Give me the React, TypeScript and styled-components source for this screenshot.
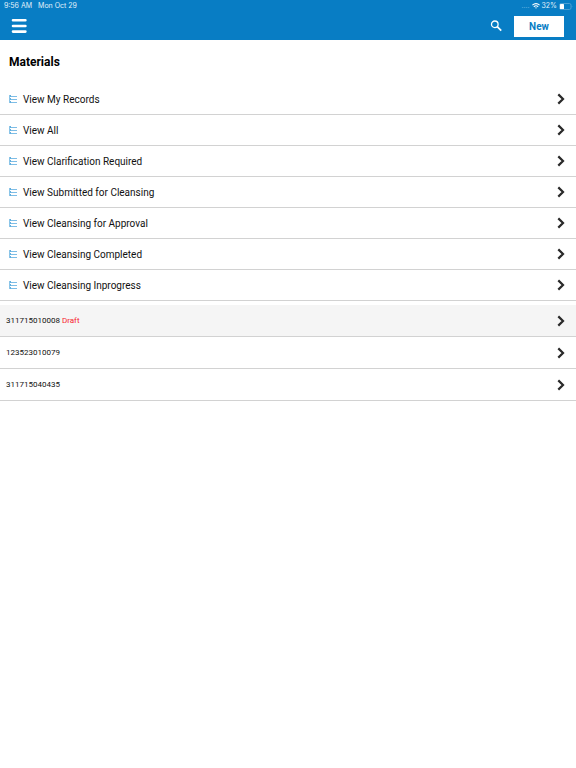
import React from "react";
import styled, { createGlobalStyle } from "styled-components";

const GlobalStyle = createGlobalStyle`
  * { box-sizing: border-box; }
  body {
    margin: 0;
    background: #fff;
    color: #000;
    font-family: Roboto, "Liberation Sans", sans-serif;
  }
  button { font: inherit; border: 0; padding: 0; cursor: pointer; }
`;

const TopArea = styled.header`
  background: #087dc4;
  height: 40px;
`;

const StatusBar = styled.div`
  display: flex;
  align-items: center;
  justify-content: space-between;
  height: 12px;
  padding: 0 3px 0 4px;
  color: #e0f0fa;
  font-family: Inter, sans-serif;
  font-size: 7px;
  line-height: 12px;
`;

const StatusGroup = styled.div<{ $gap: number }>`
  display: flex;
  align-items: center;
  gap: ${(p) => p.$gap}px;
`;

const SignalDots = styled.span`
  color: #6fb4e0;
`;

const Toolbar = styled.div`
  display: flex;
  align-items: center;
  height: 28px;
  padding: 0 12px 0 11px;
`;

const IconButton = styled.button`
  display: flex;
  align-items: center;
  background: none;
  color: #fff;
`;

const Actions = styled.div`
  display: flex;
  align-items: center;
  gap: 12px;
  margin-left: auto;
`;

const NewButton = styled.button`
  && {
    width: 50px;
    height: 21px;
    background: #fff;
    color: #087dc4;
    font-size: 10px;
    font-weight: 700;
  }
`;

const Title = styled.h1`
  margin: 0;
  padding: 14px 9px;
  font-size: 12px;
  line-height: 16px;
  font-weight: 700;
`;

const List = styled.ul`
  list-style: none;
  margin: 0 0 4px;
  padding: 0;
`;

const Row = styled.a<{ $compact?: boolean; $shaded?: boolean }>`
  display: flex;
  align-items: center;
  height: ${(p) => (p.$compact ? 32 : 31)}px;
  padding: 0 10px 0 ${(p) => (p.$compact ? 6 : 8)}px;
  border-bottom: 1px solid #d2d2d2;
  background: ${(p) => (p.$shaded ? "#f5f5f5" : "#fff")};
  color: #111;
  font-size: ${(p) => (p.$compact ? 8 : 10)}px;
  text-decoration: none;
`;

const Label = styled.span`
  flex: 1;
`;

const Draft = styled.span`
  color: #f5222d;
`;

const ListGlyph = styled.svg`
  margin-right: 5px;
`;

const Chevron = () => (
  <svg width="10" height="12" viewBox="0 0 10 12" fill="none" stroke="#2a2a2a" strokeWidth="2.2" aria-hidden="true">
    <path d="M2.3 1.4 7 6 2.3 10.6" />
  </svg>
);

const ListIcon = () => (
  <ListGlyph width="10" height="10" viewBox="0 0 10 10" aria-hidden="true">
    <path d="M1 1h2v2H1zM1 4h2v2H1zM1 7h2v2H1z" fill="#62aedd" />
    <path d="M1.5 1v8" stroke="#8bc5e8" />
    <path d="M3 2.5h6M3 5.5h6M3 8.5h6" stroke="#7dbde6" />
  </ListGlyph>
);

const MenuIcon = () => (
  <svg width="16" height="16" viewBox="0 0 16 16" stroke="#fff" strokeWidth="2.6" strokeLinecap="round" aria-hidden="true">
    <path d="M2 2.3h12.4M2 8h12.4M2 13.6h12.4" />
  </svg>
);

const SearchIcon = () => (
  <svg width="12" height="12" viewBox="0 0 12 12" fill="none" stroke="#fff" aria-hidden="true">
    <circle cx="4.8" cy="4.3" r="3.3" strokeWidth="1.3" />
    <path d="m7.2 6.7 4 4" strokeWidth="1.7" />
  </svg>
);

const WifiIcon = () => (
  <svg width="8" height="6" viewBox="0 0 8 6" fill="none" stroke="#fff" strokeWidth="1.1" aria-hidden="true">
    <path d="M.4 2.2Q4-.9 7.6 2.2M1.8 3.7Q4 1.9 6.2 3.7" />
    <path d="M3 4.6h2L4 5.8z" fill="#fff" stroke="none" />
  </svg>
);

const BatteryIcon = () => (
  <svg width="14" height="7" viewBox="0 0 14 7" aria-hidden="true">
    <rect x=".5" y=".5" width="11.5" height="6" rx="1.6" fill="none" stroke="#65addb" strokeWidth=".7" />
    <rect x="1" y="1" width="4" height="5" rx=".6" fill="#fff" />
    <path d="M12.8 2.5q1 1 0 2z" fill="#65addb" />
  </svg>
);

const views = [
  "View My Records",
  "View All",
  "View Clarification Required",
  "View Submitted for Cleansing",
  "View Cleansing for Approval",
  "View Cleansing Completed",
  "View Cleansing Inprogress",
];

const records = [
  { id: "311715010008", draft: true },
  { id: "123523010079", draft: false },
  { id: "311715040435", draft: false },
];

export default function App() {
  return (
    <>
      <GlobalStyle />
      <TopArea>
        <StatusBar>
          <StatusGroup $gap={6}>
            <span>9:56 AM</span>
            <span>Mon Oct 29</span>
          </StatusGroup>
          <StatusGroup $gap={2}>
            <SignalDots>....</SignalDots>
            <WifiIcon />
            <span>32%</span>
            <BatteryIcon />
          </StatusGroup>
        </StatusBar>
        <Toolbar>
          <IconButton type="button" aria-label="Menu"><MenuIcon /></IconButton>
          <Actions>
            <IconButton type="button" aria-label="Search"><SearchIcon /></IconButton>
            <NewButton type="button">New</NewButton>
          </Actions>
        </Toolbar>
      </TopArea>
      <main>
        <Title>Materials</Title>
        <List>
          {views.map((view) => (
            <li key={view}>
              <Row href="#">
                <ListIcon />
                <Label>{view}</Label>
                <Chevron />
              </Row>
            </li>
          ))}
        </List>
        <List>
          {records.map((record) => (
            <li key={record.id}>
              <Row href="#" $compact $shaded={record.draft}>
                <Label>
                  {record.id} {record.draft && <Draft>Draft</Draft>}
                </Label>
                <Chevron />
              </Row>
            </li>
          ))}
        </List>
      </main>
    </>
  );
}
